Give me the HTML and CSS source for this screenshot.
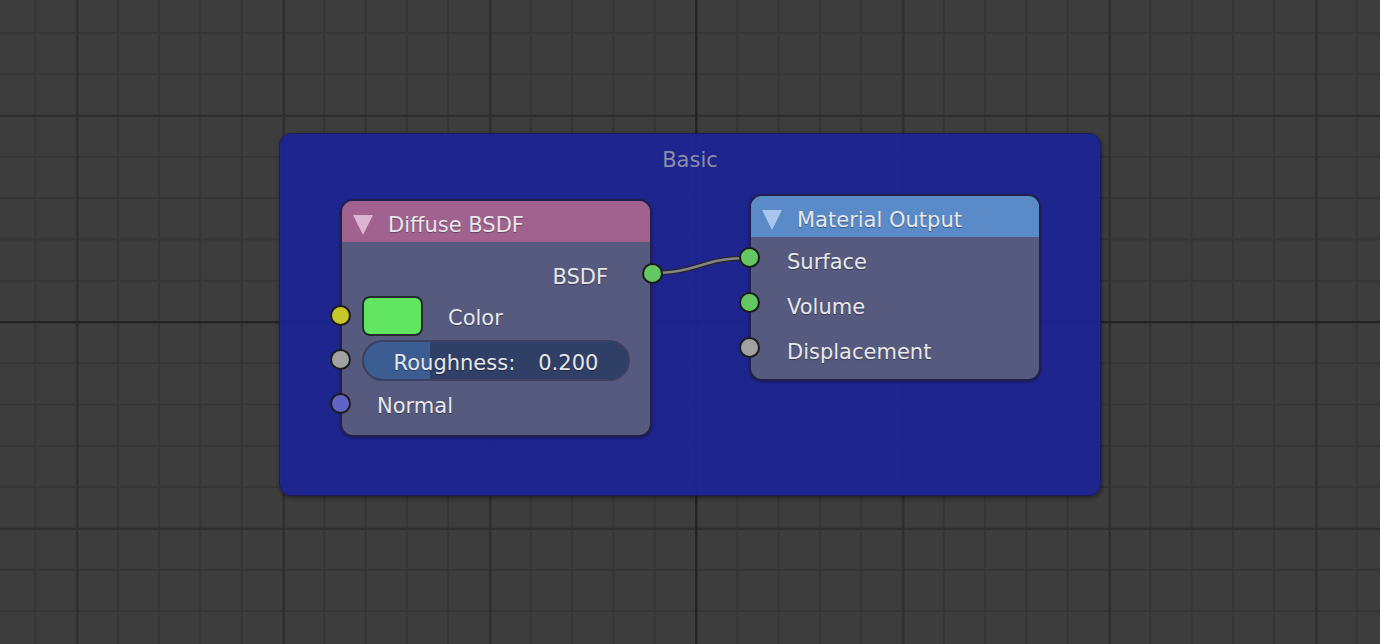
FILE: index.html
```html
<!DOCTYPE html>
<html>
<head>
<meta charset="utf-8">
<link rel="stylesheet" href="styles.css">
</head>
<body>
<div class="canvas">
  <div class="frame"><div class="frame-label">Basic</div></div>

  <svg class="links" width="1380" height="644" viewBox="0 0 1380 644">
    <path d="M650 273 C 700 273, 700 258, 750 258" fill="none" stroke="#262626" stroke-width="5"/>
    <path d="M650 273 C 700 273, 700 258, 750 258" fill="none" stroke="#858588" stroke-width="2.5"/>
  </svg>

  <div class="node diffuse">
    <div class="node-header">
      <span class="collapse"></span>
      <span class="title">Diffuse BSDF</span>
    </div>
    <div class="node-body">
      <div class="row row-out">
        <span class="label">BSDF</span>
        <i class="socket socket-right green"></i>
      </div>
      <div class="row row-color">
        <i class="socket socket-left yellow"></i>
        <div class="swatch"></div>
        <span class="label label-low">Color</span>
      </div>
      <div class="row row-slider">
        <i class="socket socket-left grey"></i>
        <div class="slider">
          <div class="slider-fill"></div>
          <span class="slider-text">Roughness:</span>
          <span class="slider-text">0.200</span>
        </div>
      </div>
      <div class="row row-normal">
        <i class="socket socket-left purple"></i>
        <span class="label label-low">Normal</span>
      </div>
    </div>
  </div>

  <div class="node output">
    <div class="node-header">
      <span class="collapse"></span>
      <span class="title">Material Output</span>
    </div>
    <div class="node-body">
      <div class="row row-in">
        <i class="socket socket-left green"></i>
        <span class="label label-low">Surface</span>
      </div>
      <div class="row row-in">
        <i class="socket socket-left green"></i>
        <span class="label label-low">Volume</span>
      </div>
      <div class="row row-in">
        <i class="socket socket-left grey"></i>
        <span class="label label-low">Displacement</span>
      </div>
    </div>
  </div>
</div>
</body>
</html>
```

FILE: styles.css
```css
html, body {
  margin: 0;
  padding: 0;
}

body {
  width: 1380px;
  height: 644px;
  overflow: hidden;
  font-family: "DejaVu Sans", "Liberation Sans", sans-serif;
  background-color: #3d3d3d;
  background-image:
    linear-gradient(#232323, #232323),
    linear-gradient(#232323, #232323),
    linear-gradient(to right, #2e2e2e 2px, transparent 2px),
    linear-gradient(to bottom, #2e2e2e 2px, transparent 2px),
    linear-gradient(to right, #353535 2px, transparent 2px),
    linear-gradient(to bottom, #353535 2px, transparent 2px);
  background-size:
    2px 100%,
    100% 2px,
    206.5px 100%,
    100% 206.5px,
    41.3px 100%,
    100% 41.3px;
  background-position:
    695px 0,
    0 321px,
    283px 0,
    0 115px,
    695px 0,
    0 321px;
  background-repeat:
    no-repeat,
    no-repeat,
    repeat-x,
    repeat-y,
    repeat-x,
    repeat-y;
}

.canvas {
  position: relative;
  width: 1380px;
  height: 644px;
}

.frame {
  position: absolute;
  left: 279px;
  top: 133px;
  width: 822px;
  height: 363px;
  box-sizing: border-box;
  border-radius: 12px;
  background: rgba(29, 35, 148, 0.93);
  border: 1px solid #1a1d5a;
  box-shadow: 1px 2px 4px rgba(0, 0, 0, 0.45);
}

.frame-label {
  text-align: center;
  padding-top: 13px;
  font-size: 21px;
  color: #8c8ca6;
  line-height: 26px;
}

.links {
  position: absolute;
  left: 0;
  top: 0;
  pointer-events: none;
}

.node {
  position: absolute;
  box-sizing: border-box;
  border: 2px solid #20204a;
  border-radius: 13px;
  background: #565a7f;
  color: #e8e8ea;
  box-shadow: 0 1px 3px rgba(0, 0, 0, 0.35);
}

.diffuse {
  left: 340px;
  top: 199px;
  width: 312px;
  height: 238px;
}

.output {
  left: 749px;
  top: 194px;
  width: 292px;
  height: 187px;
}

.node-header {
  height: 41px;
  box-sizing: border-box;
  padding-top: 7px;
  display: flex;
  align-items: center;
  border-radius: 11px 11px 0 0;
  padding-left: 11px;
  gap: 15px;
}

.diffuse .node-header {
  background: #a1628f;
}

.output .node-header {
  background: #5a8ac8;
}

.collapse {
  width: 0;
  height: 0;
  border-left: 10px solid transparent;
  border-right: 10px solid transparent;
  border-top: 20px solid #dcb5d2;
}

.output .collapse {
  border-top-color: #a9c5ec;
}

.title {
  font-size: 21px;
  line-height: 26px;
  text-shadow: 0 1px 1px rgba(0, 0, 0, 0.35);
}

.node-body {
  display: flex;
  flex-direction: column;
}

.diffuse .node-body {
  padding-top: 20px;
  gap: 4px;
}

.output .node-body {
  padding-top: 1px;
}

.row {
  position: relative;
  display: flex;
  align-items: center;
  height: 40px;
  font-size: 21px;
}

.label {
  text-shadow: 0 1px 1px rgba(0, 0, 0, 0.35);
}

.label-low {
  padding-top: 3px;
}

.row-out {
  height: 30px;
  justify-content: flex-end;
  padding-right: 42px;
}

.row-color {
  padding-left: 20px;
  gap: 25px;
}

.row-slider {
  padding-left: 20px;
}

.row-normal {
  padding-left: 35px;
}

.output .row-in {
  height: 45px;
  padding-left: 36px;
}

.socket {
  position: absolute;
  top: 50%;
  width: 21px;
  height: 21px;
  box-sizing: border-box;
  border: 2px solid #1c1c1c;
  border-radius: 50%;
  margin-top: -11.5px;
}

.output .socket {
  margin-top: -13.5px;
}

.socket-left {
  left: -12.5px;
}

.socket-right {
  right: -12.5px;
  margin-top: -14.5px;
}

.green { background: #63c763; }
.yellow { background: #c7c729; }
.grey { background: #a1a1a1; }
.purple { background: #6363c7; }

.swatch {
  width: 61px;
  height: 40px;
  box-sizing: border-box;
  border: 2px solid #262a30;
  border-radius: 8px;
  background: #62e662;
}

.slider {
  position: relative;
  width: 268px;
  height: 41px;
  box-sizing: border-box;
  border: 2px solid #3c4160;
  border-radius: 21px;
  background: #2f3f65;
  overflow: hidden;
  display: flex;
  align-items: center;
  justify-content: center;
  gap: 23px;
}

.slider-fill {
  position: absolute;
  left: 0;
  top: 0;
  bottom: 0;
  width: 66px;
  background: #3b5d92;
}

.slider-text {
  position: relative;
  font-size: 21px;
  padding-top: 5px;
  color: #e6e6ea;
  text-shadow: 0 1px 1px rgba(0, 0, 0, 0.35);
}
```
